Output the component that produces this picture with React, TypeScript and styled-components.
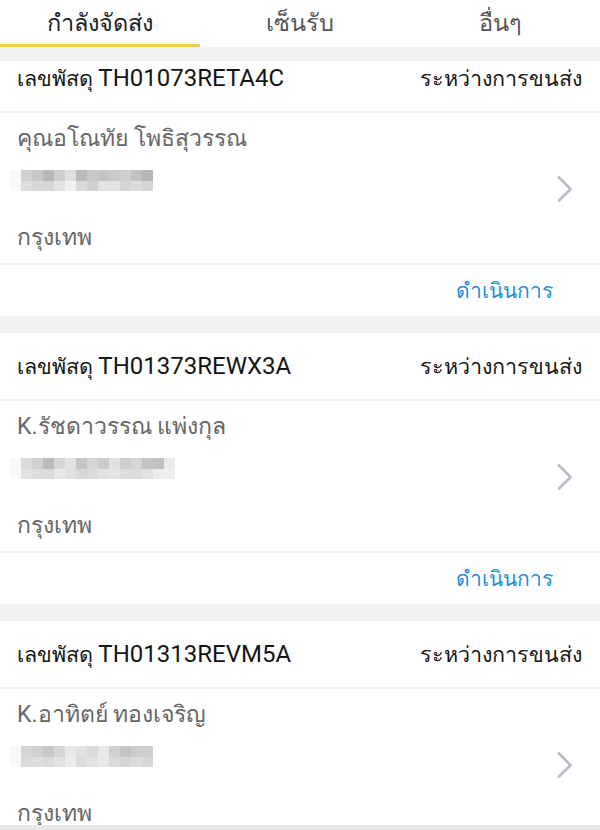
import React from "react";
import styled, { createGlobalStyle } from "styled-components";

const GlobalStyle = createGlobalStyle`
  html, body {
    margin: 0;
    padding: 0;
    background: #ffffff;
  }
  body {
    font-family: Roboto, "Noto Sans", "Liberation Sans", sans-serif;
  }
`;

const Page = styled.div`
  width: 600px;
  height: 830px;
  display: flex;
  flex-direction: column;
  overflow: hidden;
  background: #f2f2f2;
`;

const TabBar = styled.div`
  display: flex;
  height: 47px;
  background: #ffffff;
  flex-shrink: 0;
`;

const Tab = styled.div<{ $active?: boolean }>`
  flex: 1;
  display: flex;
  align-items: center;
  justify-content: center;
  font-size: 23.5px;
  color: ${(p) => (p.$active ? "#222222" : "#555555")};
  border-bottom: 3px solid ${(p) => (p.$active ? "#f3c947" : "transparent")};
  padding-top: 1px;
`;

const TopGap = styled.div`
  height: 14px;
  flex-shrink: 0;
`;

const Scroller = styled.div`
  flex: 1;
  overflow: hidden;
`;

const List = styled.div`
  display: flex;
  flex-direction: column;
  gap: 17px;
  margin-top: -16px;
`;

const Card = styled.div`
  background: #ffffff;
`;

const CardHeader = styled.div`
  height: 66px;
  display: flex;
  align-items: center;
  justify-content: space-between;
  padding: 0 18px 0 17px;
  border-bottom: 2px solid #f0f0f0;
  font-size: 21.5px;
  color: #151515;
`;

const Latin = styled.span`
  font-size: 24px;
`;

const CardBody = styled.div`
  display: flex;
  align-items: center;
  justify-content: space-between;
  padding: 11px 26px 10px 17px;
  border-bottom: 2px solid #f0f0f0;
`;

const Info = styled.div`
  display: flex;
  flex-direction: column;
`;

const GrayLine = styled.div`
  font-size: 23px;
  line-height: 30px;
  color: #666666;
`;

const Mosaic = styled.div<{ $cols: number }>`
  display: grid;
  grid-template-columns: repeat(${(p) => p.$cols}, 11px);
  grid-auto-rows: 10.5px;
  margin: 16px 0 32px -7px;
  filter: blur(0.6px);
`;

const Cell = styled.div<{ $shade: number }>`
  background: ${(p) => `rgb(${p.$shade}, ${p.$shade}, ${p.$shade})`};
`;

const ActionRow = styled.div`
  height: 51px;
  display: flex;
  align-items: center;
  justify-content: flex-end;
  padding-right: 47px;
`;

const ActionLink = styled.span`
  font-size: 21px;
  color: #1f8fd6;
`;

const BottomEdge = styled.div`
  height: 5px;
  background: #e9e9e9;
  flex-shrink: 0;
`;

const Chevron = () => (
  <svg width="18" height="28" viewBox="0 0 18 28" fill="none">
    <path
      d="M3 2.5 L14.5 14 L3 25.5"
      stroke="#b4bdc5"
      strokeWidth="2.6"
      strokeLinecap="round"
      strokeLinejoin="round"
    />
  </svg>
);

interface Parcel {
  id: string;
  prefix?: string;
  name: string;
  city: string;
  mosaic: number[];
}

const parcels: Parcel[] = [
  {
    id: "TH01073RETA4C",
    name: "คุณอโณทัย โพธิสุวรรณ",
    city: "กรุงเทพ",
    mosaic: [
      248, 208, 200, 184, 206, 222, 186, 200, 196, 202, 206, 194, 182,
      248, 222, 216, 214, 226, 240, 216, 208, 226, 226, 214, 220, 214,
    ],
  },
  {
    id: "TH01373REWX3A",
    prefix: "K.",
    name: "รัชดาวรรณ  แพ่งกุล",
    city: "กรุงเทพ",
    mosaic: [
      248, 218, 208, 188, 214, 226, 196, 214, 204, 224, 206, 214, 196, 192, 234,
      248, 226, 220, 218, 232, 224, 216, 218, 226, 230, 220, 218, 226, 236, 238,
    ],
  },
  {
    id: "TH01313REVM5A",
    prefix: "K.",
    name: "อาทิตย์ ทองเจริญ",
    city: "กรุงเทพ",
    mosaic: [
      248, 214, 208, 200, 214, 232, 226, 218, 232, 208, 196, 204, 206,
      248, 218, 222, 218, 226, 236, 220, 226, 232, 218, 214, 220, 216,
    ],
  },
];

const ParcelCard: React.FC<{ parcel: Parcel }> = ({ parcel }) => {
  const cols = parcel.mosaic.length / 2;
  return (
    <Card>
      <CardHeader>
        <span>
          เลขพัสดุ <Latin>{parcel.id}</Latin>
        </span>
        <span>ระหว่างการขนส่ง</span>
      </CardHeader>
      <CardBody>
        <Info>
          <GrayLine>
            {parcel.prefix}
            {parcel.name}
          </GrayLine>
          <Mosaic $cols={cols}>
            {parcel.mosaic.map((s, i) => (
              <Cell key={i} $shade={s} />
            ))}
          </Mosaic>
          <GrayLine>{parcel.city}</GrayLine>
        </Info>
        <Chevron />
      </CardBody>
      <ActionRow>
        <ActionLink>ดำเนินการ</ActionLink>
      </ActionRow>
    </Card>
  );
};

export default function App() {
  return (
    <>
      <GlobalStyle />
      <Page>
        <TabBar>
          <Tab $active>กำลังจัดส่ง</Tab>
          <Tab>เซ็นรับ</Tab>
          <Tab>อื่นๆ</Tab>
        </TabBar>
        <TopGap />
        <Scroller>
          <List>
            {parcels.map((p) => (
              <ParcelCard key={p.id} parcel={p} />
            ))}
          </List>
        </Scroller>
        <BottomEdge />
      </Page>
    </>
  );
}
